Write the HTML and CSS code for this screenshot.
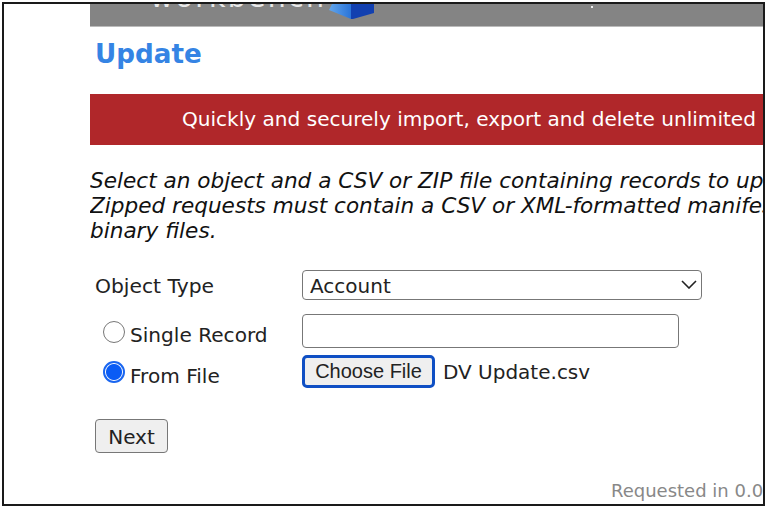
FILE: index.html
```html
<!DOCTYPE html>
<html lang="en">
<head>
  <meta charset="UTF-8">
  <meta name="viewport" content="width=device-width, initial-scale=1.0">
  <title>Update</title>
  <link rel="stylesheet" href="styles.css">
</head>
<body>
  <div class="frame">
    <div class="content">
      <div class="banner">
        <span class="logo-text">workbench</span>
        <svg class="cube" width="46" height="16" viewBox="0 0 46 16">
          <defs>
            <linearGradient id="cubeLeft" x1="0" y1="0" x2="1" y2="0">
              <stop offset="0" stop-color="#62a6ec"/>
              <stop offset="1" stop-color="#2a74d8"/>
            </linearGradient>
          </defs>
          <path d="M3 0 L0 6 L22 15 L22 0 Z" fill="url(#cubeLeft)"/>
          <path d="M22 0 L45 0 L45 9 L24 15 L22 15 Z" fill="#1240b0"/>
        </svg>
        <span class="dot"></span>
      </div>

      <h1>Update</h1>

      <div class="notice">Quickly and securely import, export and delete unlimited</div>

      <p class="intro">Select an object and a CSV or ZIP file containing records to update.<br>Zipped requests must contain a CSV or XML-formatted manifest and any<br>binary files.</p>

      <div class="row row-type">
        <label class="type-label" for="objectType">Object Type</label>
        <div class="select-wrap">
          <select id="objectType">
            <option>Account</option>
          </select>
          <svg class="chevron" width="16" height="9" viewBox="0 0 16 9">
            <path d="M1 1 L8 8 L15 1" fill="none" stroke="#222" stroke-width="1.6"/>
          </svg>
        </div>
      </div>

      <div class="row row-single">
        <label class="radio-label"><input type="radio" name="source"><span>Single Record</span></label>
        <input class="text-input" type="text">
      </div>

      <div class="row row-file">
        <label class="radio-label"><input type="radio" name="source" checked><span>From File</span></label>
        <div class="file-pick">
          <button class="choose">Choose File</button>
          <span>DV Update.csv</span>
        </div>
      </div>

      <button class="next">Next</button>

      <div class="timing">Requested in 0.021 seconds</div>
    </div>
  </div>
</body>
</html>
```

FILE: styles.css
```css
html, body {
  margin: 0;
  padding: 0;
}
body {
  width: 768px;
  height: 509px;
  overflow: hidden;
  background: #fff;
  font-family: "DejaVu Sans", Verdana, sans-serif;
  color: #222;
}
.frame {
  box-sizing: border-box;
  width: 763px;
  height: 504px;
  margin: 2px 0 0 2px;
  border: 2px solid #1a1a1a;
  overflow: hidden;
}
.content {
  margin-left: 86px;
  height: 100%;
  white-space: nowrap;
  overflow: hidden;
}
.banner {
  position: relative;
  display: flex;
  height: 22px;
  background: #848484;
  border-bottom: 1px solid #bbb;
  overflow: hidden;
}
.logo-text {
  margin: -24px 0 0 60px;
  font-size: 28.5px;
  line-height: 36px;
  letter-spacing: 2.2px;
  color: #e8e8e8;
}
.cube {
  margin-left: 3px;
}
.dot {
  position: absolute;
  left: 501px;
  top: 2px;
  width: 2px;
  height: 2px;
  background: #eee;
}
h1 {
  margin: 11px 0 0 5px;
  font-size: 26.2px;
  line-height: 32px;
  color: #3584e4;
}
.notice {
  height: 51px;
  margin-top: 24px;
  padding-left: 92px;
  background: #b0272a;
  color: #fff;
  font-size: 20.07px;
  line-height: 50px;
}
.intro {
  margin: 23px 0 0;
  font-size: 21.6px;
  line-height: 25px;
  font-style: italic;
  color: #111;
}
.row {
  display: flex;
  align-items: center;
}
.row-type {
  margin-top: 27px;
}
.type-label {
  position: relative;
  top: 1px;
  width: 207px;
  margin-left: 5px;
  font-size: 20.3px;
}
.select-wrap {
  position: relative;
  display: flex;
}
select {
  box-sizing: border-box;
  width: 400px;
  height: 30px;
  padding: 1px 0 0 7px;
  appearance: none;
  background: #fff;
  border: 1.5px solid #777;
  border-radius: 4px;
  font-family: inherit;
  font-size: 20px;
  color: #222;
}
.chevron {
  position: absolute;
  right: 5px;
  top: 10px;
}
.row-single {
  margin-top: 14px;
}
.radio-label {
  display: flex;
  align-items: center;
  width: 199px;
  margin-left: 13px;
  font-size: 20.1px;
}
.radio-label span {
  position: relative;
  top: 4px;
}
.radio-label input {
  box-sizing: border-box;
  width: 22px;
  height: 22px;
  margin: 1px 5px 0 0;
  appearance: none;
  background: #fff;
  border: 1.5px solid #777;
  border-radius: 50%;
}
.radio-label input:checked {
  border: 2px solid #1a66f0;
  background: radial-gradient(circle, #0a5cf5 0 7.5px, #fff 8.5px);
}
.text-input {
  box-sizing: border-box;
  width: 377px;
  height: 34px;
  background: #fff;
  border: 1.5px solid #777;
  border-radius: 4px;
}
.row-file {
  margin-top: 7px;
}
.file-pick {
  display: flex;
  align-items: center;
  gap: 8px;
  font-size: 20px;
}
.choose {
  box-sizing: border-box;
  width: 133px;
  height: 33px;
  padding: 0;
  background: #efefef;
  border: 3px solid #0f4fc4;
  border-radius: 5px;
  font-family: "Liberation Sans", Arial, sans-serif;
  font-size: 20px;
  color: #222;
}
.next {
  display: block;
  box-sizing: border-box;
  width: 73px;
  height: 34px;
  margin: 31px 0 0 5px;
  padding: 1px 0 0;
  background: #efefef;
  border: 1.5px solid #777;
  border-radius: 4px;
  font-family: inherit;
  font-size: 20px;
  color: #222;
}
.timing {
  margin: 27px 0 0 521px;
  font-size: 18px;
  line-height: 22px;
  color: #888;
}
```
